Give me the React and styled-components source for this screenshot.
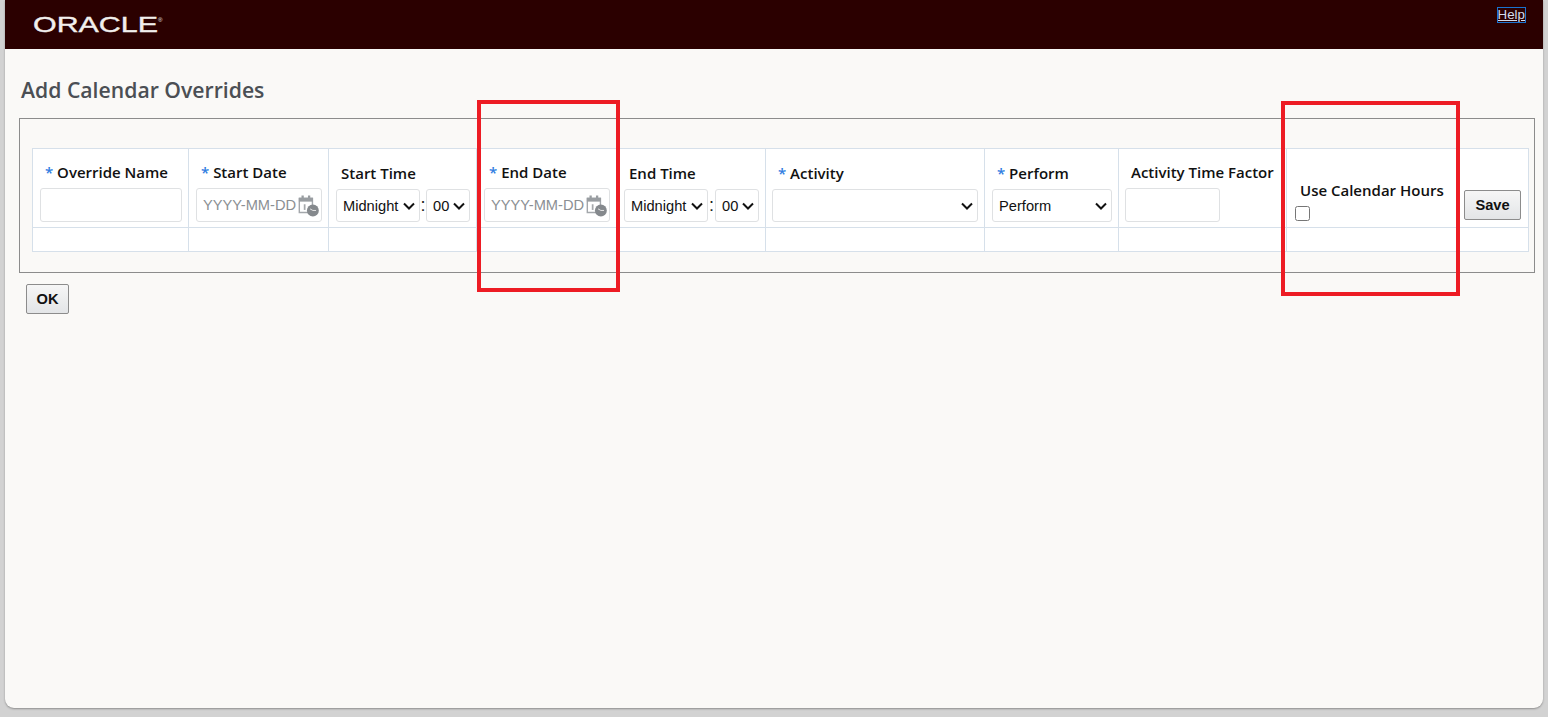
import styled, { createGlobalStyle } from "styled-components";

const GlobalStyle = createGlobalStyle`
  html, body {
    margin: 0;
    height: 100%;
    background: #d2d2d2;
    overflow: hidden;
  }
`;

const HOURS = ["Midnight"];
const MINUTES = ["00"];

const CHEVRON =
  "data:image/svg+xml,%3Csvg xmlns='http://www.w3.org/2000/svg' width='12' height='8' viewBox='0 0 12 8'%3E%3Cpath d='M1 1.5l5 5 5-5' fill='none' stroke='%23111' stroke-width='2'/%3E%3C/svg%3E";

function CalendarIcon() {
  return (
    <svg width="21" height="22" viewBox="0 0 24 25">
      <path d="M1.5 4h15v16h-15z" fill="#fff" stroke="#a3a7ab" strokeWidth="1.6" />
      <path d="M1 3h16v4.5H1z" fill="#999da1" />
      <path d="M4 .5h2.6V5H4zM11.4.5H14V5h-2.6z" fill="#999da1" />
      <path d="M6.6 10.5h2v6.5h-2z" fill="#a5a8ab" />
      <circle cx="17" cy="17.6" r="6.8" fill="#85898d" />
      <path d="M17 17.6l-3.2-1.8M17 17.6h3.6" stroke="#e8e8e8" strokeWidth="1.1" fill="none" />
    </svg>
  );
}

function DateField({ label }) {
  return (
    <Field>
      <Label $indent={5}>
        <Star>*</Star> {label}
      </Label>
      <DateBox>
        <DateInput placeholder="YYYY-MM-DD" />
        <IconSlot>
          <CalendarIcon />
        </IconSlot>
      </DateBox>
    </Field>
  );
}

function TimeField({ label, colonWidth = 6 }) {
  return (
    <Field>
      <TimeLabel $indent={5}>{label}</TimeLabel>
      <TimeRow>
        <Select $width={84}>
          {HOURS.map((h) => (
            <option key={h}>{h}</option>
          ))}
        </Select>
        <Colon $width={colonWidth}>:</Colon>
        <Select $width={44}>
          {MINUTES.map((m) => (
            <option key={m}>{m}</option>
          ))}
        </Select>
      </TimeRow>
    </Field>
  );
}

export default function App() {
  return (
    <>
      <GlobalStyle />
      <Page>
        <Header>
          <Logo viewBox="0 0 134 24" aria-label="Oracle">
            <text
              x="0"
              y="19"
              textLength="125"
              lengthAdjust="spacingAndGlyphs"
              fontFamily="'Liberation Sans', sans-serif"
              fontSize="21.5"
              fill="#f1efed"
              stroke="#f1efed"
              strokeWidth="0.35"
            >
              ORACLE
            </text>
            <text x="125" y="9" fontFamily="'Liberation Sans', sans-serif" fontSize="6" fill="#f1efed">
              ®
            </text>
          </Logo>
          <HelpLink href="#help">Help</HelpLink>
        </Header>
        <Title>Add Calendar Overrides</Title>
        <Panel>
          <Grid>
            <colgroup>
              <col style={{ width: 156 }} />
              <col style={{ width: 140 }} />
              <col style={{ width: 148 }} />
              <col style={{ width: 141 }} />
              <col style={{ width: 148 }} />
              <col style={{ width: 219 }} />
              <col style={{ width: 134 }} />
              <col style={{ width: 168 }} />
              <col style={{ width: 170 }} />
              <col style={{ width: 72 }} />
            </colgroup>
            <tbody>
              <FieldRow>
                <Cell>
                  <Field>
                    <Label $indent={5}>
                      <Star>*</Star> Override Name
                    </Label>
                    <TextInput $width={142} />
                  </Field>
                </Cell>
                <Cell>
                  <DateField label="Start Date" />
                </Cell>
                <Cell>
                  <TimeField label="Start Time" />
                </Cell>
                <Cell>
                  <DateField label="End Date" />
                </Cell>
                <Cell $left={6}>
                  <TimeField label="End Time" colonWidth={7} />
                </Cell>
                <Cell $left={6}>
                  <Field>
                    <TimeLabel $indent={6}>
                      <Star>*</Star> Activity
                    </TimeLabel>
                    <Select $width={206} />
                  </Field>
                </Cell>
                <Cell>
                  <Field>
                    <TimeLabel $indent={5}>
                      <Star>*</Star> Perform
                    </TimeLabel>
                    <Select $width={120}>
                      <option>Perform</option>
                    </Select>
                  </Field>
                </Cell>
                <Cell $left={6}>
                  <Field>
                    <Label $indent={6}>Activity Time Factor</Label>
                    <TextInput $width={95} />
                  </Field>
                </Cell>
                <Cell $left={8}>
                  <Field>
                    <Label $indent={5}>Use Calendar Hours</Label>
                    <Check type="checkbox" />
                  </Field>
                </Cell>
                <Cell>
                  <SaveButton>Save</SaveButton>
                </Cell>
              </FieldRow>
              <EmptyRow>
                {Array.from({ length: 10 }, (_, i) => (
                  <td key={i} />
                ))}
              </EmptyRow>
            </tbody>
          </Grid>
        </Panel>
        <OkButton>OK</OkButton>
        <Highlight $x={477} $y={100} $w={143} $h={192} />
        <Highlight $x={1281} $y={101} $w={179} $h={195} />
      </Page>
    </>
  );
}

const Page = styled.div`
  position: relative;
  box-sizing: border-box;
  height: 708px;
  margin: 0 5px;
  background: #faf9f7;
  border-radius: 0 0 9px 9px;
  box-shadow: 0 1px 2px #8f8f8f;
  overflow: hidden;
`;
const Header = styled.header`
  box-sizing: border-box;
  display: flex;
  justify-content: space-between;
  align-items: flex-start;
  height: 49px;
  padding: 8px 18px 0 28px;
  background: #2b0000;
`;
const Logo = styled.svg`
  width: 134px;
  height: 24px;
  margin-top: 5px;
`;
const HelpLink = styled.a`
  height: 14px;
  line-height: 14px;
  font-family: "Liberation Sans", Arial, sans-serif;
  font-size: 13.33px;
  color: #d3dcec;
  text-decoration: underline;
  outline: 1px solid #1a73d0;
  outline-offset: 0;
`;
const Title = styled.h1`
  margin: 27px 0 0 16px;
  height: 42px;
  font-family: "Open Sans", sans-serif;
  font-size: 21.2px;
  line-height: 28px;
  font-weight: 600;
  color: #4b4f54;
`;
const Panel = styled.section`
  box-sizing: border-box;
  width: 1516px;
  height: 155px;
  margin-left: 14px;
  padding: 29px 5px 0 12px;
  border: 1px solid #8c8c8c;
`;
const Grid = styled.table`
  table-layout: fixed;
  width: 1496px;
  border-collapse: collapse;
  background: #fff;
  td {
    border: 1px solid #d6e0ea;
    padding: 0;
  }
`;
const FieldRow = styled.tr`
  height: 79px;
`;
const EmptyRow = styled.tr`
  height: 24px;
`;
const Cell = styled.td`
  && {
    padding: 0 0 5px ${(p) => p.$left ?? 7}px;
  }
  vertical-align: bottom;
`;
const Field = styled.div`
  display: flex;
  flex-direction: column;
  align-items: flex-start;
`;
const Label = styled.label`
  display: block;
  height: 25px;
  padding-left: ${(p) => p.$indent}px;
  font-family: "Open Sans", sans-serif;
  font-size: 15px;
  line-height: 18px;
  font-weight: 600;
  color: #111;
  white-space: nowrap;
`;
const TimeLabel = styled(Label)`
  height: 24px;
  line-height: 16px;
`;
const Star = styled.span`
  color: #2f7de1;
`;
const TextInput = styled.input`
  box-sizing: border-box;
  width: ${(p) => p.$width}px;
  height: 34px;
  border: 1px solid #dfe1e3;
  border-radius: 3px;
  background: #fff;
  outline: none;
`;
const DateBox = styled.div`
  display: flex;
  align-items: center;
  box-sizing: border-box;
  width: 126px;
  height: 34px;
  padding-left: 6px;
  border: 1px solid #dfe1e3;
  border-radius: 3px;
  background: #fff;
`;
const DateInput = styled.input`
  box-sizing: border-box;
  flex: none;
  width: 95px;
  padding: 0;
  border: 0;
  outline: none;
  background: transparent;
  font-family: "Liberation Sans", Arial, sans-serif;
  font-size: 14.67px;
  &::placeholder {
    color: #8b8f93;
    opacity: 1;
  }
`;
const IconSlot = styled.span`
  display: flex;
  flex: none;
  margin-top: 2px;
`;
const TimeRow = styled.div`
  display: flex;
  align-items: center;
`;
const Colon = styled.span`
  width: ${(p) => p.$width}px;
  font-family: "Liberation Sans", Arial, sans-serif;
  font-size: 18px;
  color: #222;
  text-align: center;
`;
const Select = styled.select`
  box-sizing: border-box;
  appearance: none;
  width: ${(p) => p.$width}px;
  height: 33px;
  padding: 0 0 0 6px;
  border: 1px solid #dfe1e3;
  border-radius: 3px;
  background: #fff url("${CHEVRON}") no-repeat right 4px center;
  color: #111;
  font-family: "Liberation Sans", Arial, sans-serif;
  font-size: 14.67px;
  outline: none;
`;
const Check = styled.input`
  width: 15px;
  height: 15px;
  margin: 0 0 1px 0;
  accent-color: #666;
`;
const ButtonBase = styled.button`
  box-sizing: border-box;
  padding: 0;
  border: 1px solid #8c8c8c;
  border-radius: 2px;
  background: linear-gradient(#f6f6f6, #e3e5e7);
  color: #111;
  font-family: "Liberation Sans", Arial, sans-serif;
  font-size: 14.67px;
  font-weight: 700;
`;
const SaveButton = styled(ButtonBase)`
  display: block;
  width: 57px;
  height: 30px;
  margin-bottom: 2px;
`;
const OkButton = styled(ButtonBase)`
  display: block;
  width: 43px;
  height: 30px;
  margin: 11px 0 0 21px;
`;
const Highlight = styled.div`
  position: absolute;
  left: ${(p) => p.$x - 5}px;
  top: ${(p) => p.$y}px;
  box-sizing: border-box;
  width: ${(p) => p.$w}px;
  height: ${(p) => p.$h}px;
  border: 4px solid #ed1c24;
  pointer-events: none;
`;
